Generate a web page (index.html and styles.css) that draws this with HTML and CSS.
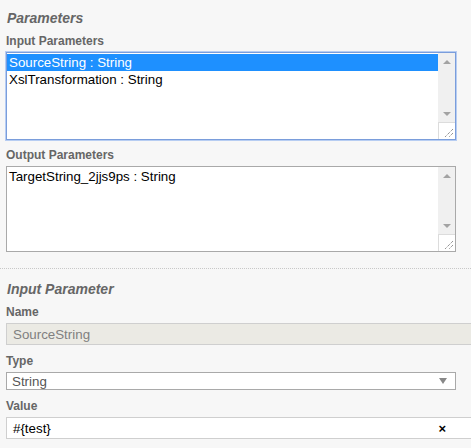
FILE: index.html
```html
<!DOCTYPE html>
<html>
<head>
  <title>Parameters</title>
  <link rel="stylesheet" href="styles.css">
</head>
<body>
  <div class="group">
    <h3 class="group-title">Parameters</h3>

    <label class="field-label">Input Parameters</label>
    <div class="listbox focused">
      <div class="list-items">
        <div class="list-item selected">SourceString : String</div>
        <div class="list-item">XslTransformation : String</div>
      </div>
      <div class="scrollbar">
        <div class="arrow up"></div>
        <div class="track"></div>
        <div class="arrow down"></div>
        <div class="resizer">
          <svg width="12" height="12" viewBox="0 0 12 12">
            <path d="M11 3 L3 11 M11 7 L7 11" stroke="#666" stroke-width="1" stroke-dasharray="1 1" fill="none"/>
          </svg>
        </div>
      </div>
    </div>

    <label class="field-label">Output Parameters</label>
    <div class="listbox output">
      <div class="list-items">
        <div class="list-item">TargetString_2jjs9ps : String</div>
      </div>
      <div class="scrollbar">
        <div class="arrow up"></div>
        <div class="track"></div>
        <div class="arrow down"></div>
        <div class="resizer">
          <svg width="12" height="12" viewBox="0 0 12 12">
            <path d="M11 3 L3 11 M11 7 L7 11" stroke="#666" stroke-width="1" stroke-dasharray="1 1" fill="none"/>
          </svg>
        </div>
      </div>
    </div>
  </div>

  <div class="group details">
    <h3 class="group-title">Input Parameter</h3>

    <label class="field-label">Name</label>
    <div class="text-input readonly">SourceString</div>

    <label class="field-label">Type</label>
    <div class="select-box">
      <span>String</span>
      <span class="select-arrow"></span>
    </div>

    <label class="field-label">Value</label>
    <div class="text-input value-input">
      <span>#{test}</span>
      <span class="clear">×</span>
    </div>
  </div>
</body>
</html>
```

FILE: styles.css
```css
body {
  margin: 0;
  background-color: #f7f7f7;
  font-family: "Liberation Sans", Arial, sans-serif;
  color: #000;
  overflow: hidden;
}

.group {
  padding: 8px 0 16px 6px;
}

.details {
  border-top: 1px dotted #c8c8c8;
  padding-top: 10px;
}

.group-title {
  margin: 0 0 6px 1px;
  font-size: 14px;
  font-weight: bold;
  font-style: italic;
  color: #666;
  line-height: 20px;
}

.field-label {
  display: block;
  font-size: 12px;
  font-weight: bold;
  color: #666;
  line-height: 14px;
  margin-bottom: 4px;
}

.listbox {
  display: flex;
  width: 450px;
  height: 88px;
  box-sizing: border-box;
  border: 1px solid #a9a9a9;
  background-color: #fff;
  margin-bottom: 8px;
}

.listbox.focused {
  border-color: #7a9ddb;
  box-shadow: 0 0 0 1px #b7cdf2;
}

.listbox.output {
  height: 86px;
  margin-bottom: 0;
}

.list-items {
  flex: 1;
  padding-top: 1px;
}

.list-item {
  font-size: 13.33px;
  line-height: 17px;
  padding-left: 2px;
}

.list-item.selected {
  background-color: #1e90ff;
  color: #fff;
}

.scrollbar {
  width: 17px;
  display: flex;
  flex-direction: column;
  background-color: #f0f0f0;
}

.arrow {
  height: 17px;
  display: flex;
  align-items: center;
  justify-content: center;
}

.arrow::before {
  content: "";
  border-left: 4px solid transparent;
  border-right: 4px solid transparent;
}

.arrow.up::before {
  border-bottom: 4px solid #a3a3a3;
}

.arrow.down::before {
  border-top: 4px solid #a3a3a3;
}

.track {
  flex: 1;
}

.resizer {
  height: 17px;
  background-color: #fff;
  border-top: 1px solid #dcdcdc;
  border-left: 1px solid #dcdcdc;
  box-sizing: border-box;
  display: flex;
  align-items: flex-end;
  justify-content: flex-end;
  padding: 0 1px 1px 0;
}

.text-input {
  display: flex;
  align-items: center;
  justify-content: space-between;
  width: 480px;
  height: 22px;
  box-sizing: border-box;
  border: 1px solid #cfcfcf;
  background-color: #fff;
  padding: 0 6px;
  font-size: 13.33px;
  margin-bottom: 9px;
}

.text-input.readonly {
  background-color: #ebeae4;
  color: #808080;
}

.value-input {
  padding-right: 39px;
  margin-bottom: 0;
}

.clear {
  font-weight: bold;
  font-size: 13px;
}

.select-box {
  display: flex;
  align-items: center;
  justify-content: space-between;
  width: 450px;
  height: 18px;
  box-sizing: border-box;
  border: 1px solid #a9a9a9;
  background-color: #fff;
  padding: 0 8px 0 5px;
  font-size: 13.33px;
  color: #555;
  margin-bottom: 9px;
}

.select-arrow {
  border-left: 4px solid transparent;
  border-right: 4px solid transparent;
  border-top: 6px solid #888;
}
```
